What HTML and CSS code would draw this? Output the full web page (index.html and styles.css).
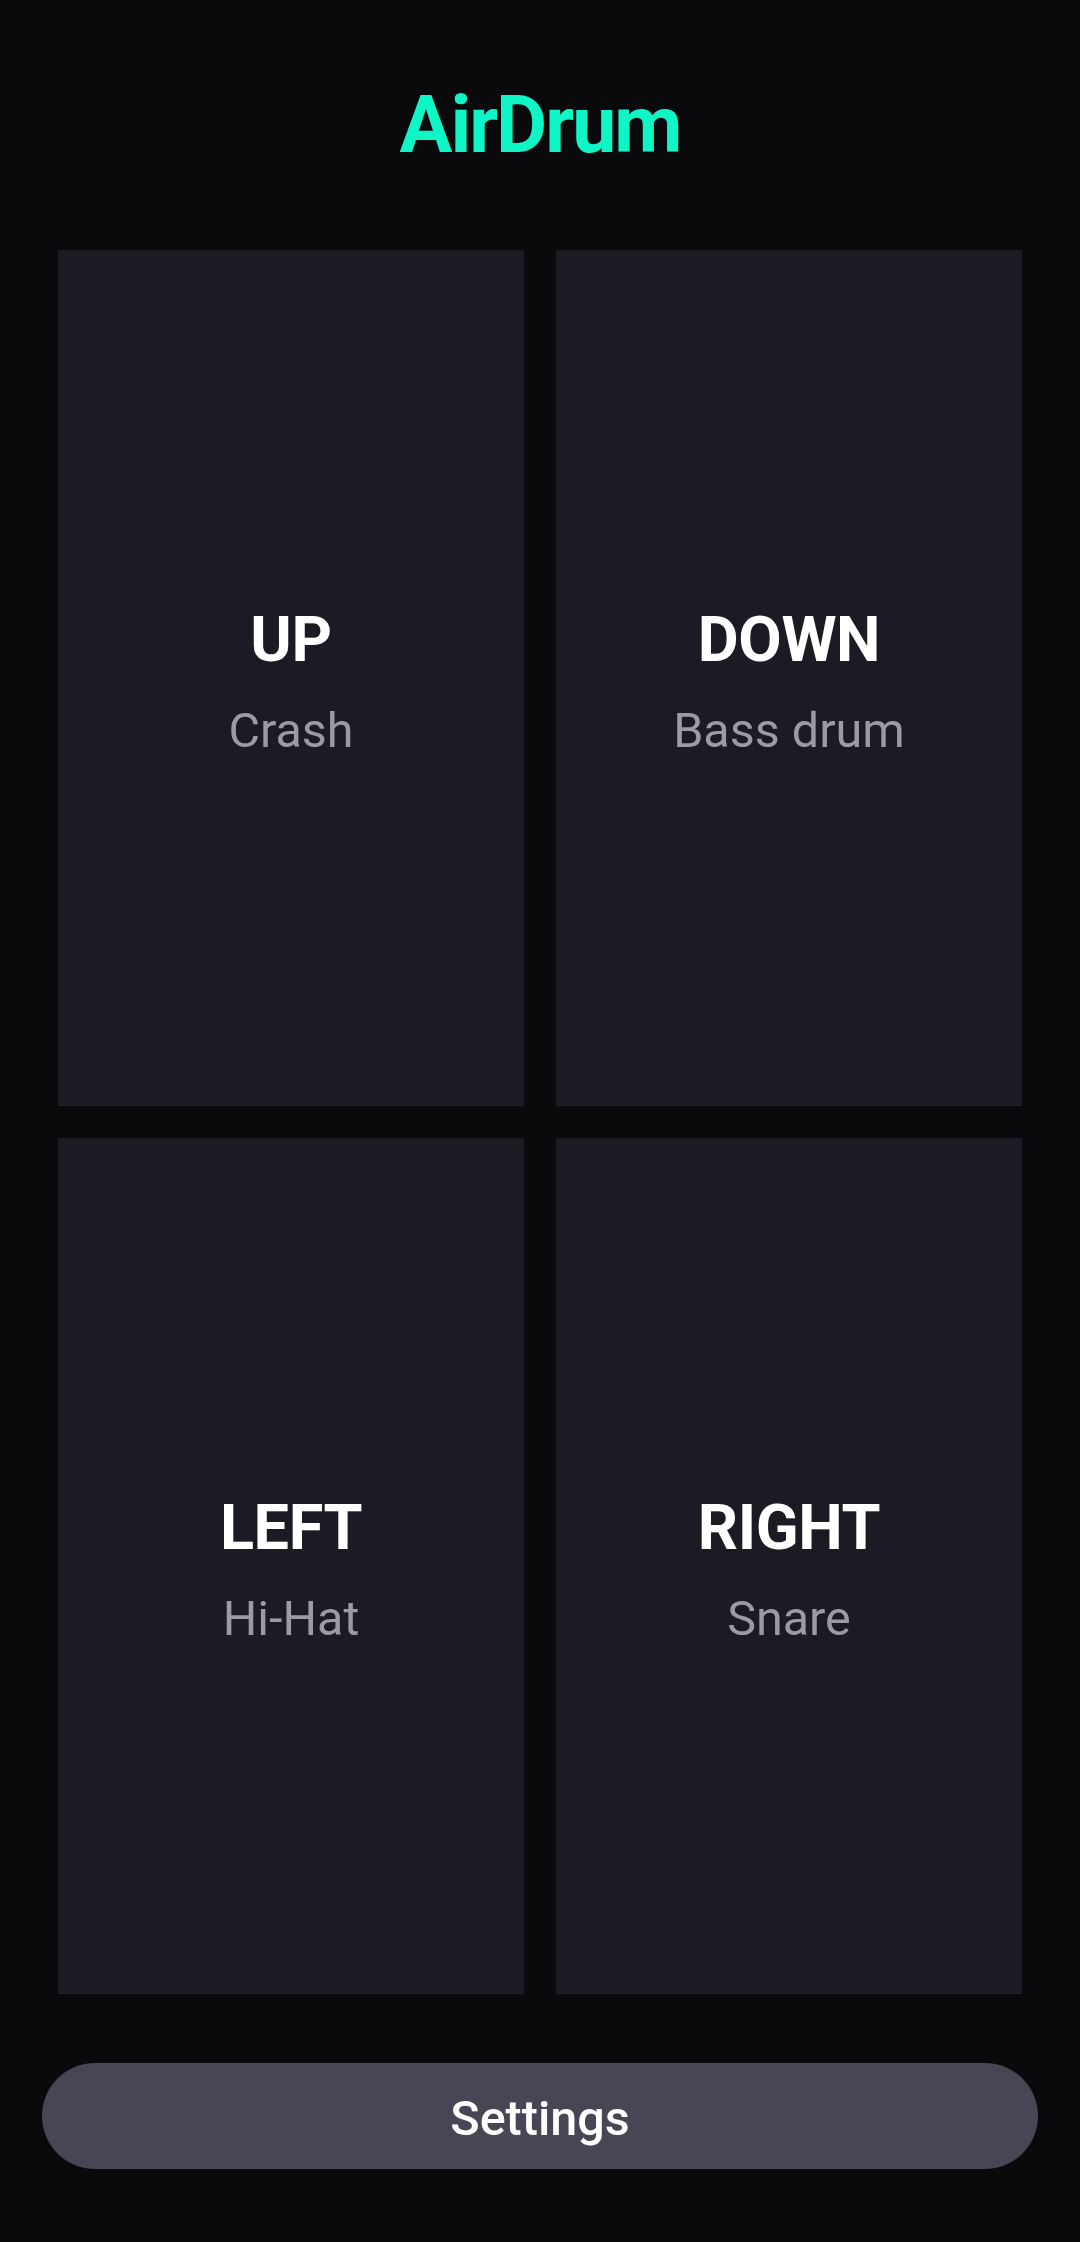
FILE: index.html
```html
<!DOCTYPE html>
<html lang="en">
<head>
<meta charset="utf-8">
<title>AirDrum</title>
<link rel="stylesheet" href="styles.css">
</head>
<body>
<main class="app">
  <h1 class="title">AirDrum</h1>
  <section class="pads">
    <div class="pad"><div class="pad-dir">UP</div><div class="pad-sound">Crash</div></div>
    <div class="pad"><div class="pad-dir">DOWN</div><div class="pad-sound">Bass drum</div></div>
    <div class="pad"><div class="pad-dir">LEFT</div><div class="pad-sound">Hi-Hat</div></div>
    <div class="pad"><div class="pad-dir">RIGHT</div><div class="pad-sound">Snare</div></div>
  </section>
  <button class="settings" type="button">Settings</button>
</main>
</body>
</html>
```
FILE: styles.css
```css
* { box-sizing: border-box; }
html, body {
  margin: 0;
  padding: 0;
  background: #0a0a0d;
}
body {
  font-family: Roboto, "Noto Sans", sans-serif;
}
.app {
  height: 2242px;
  display: flex;
  flex-direction: column;
}
.title {
  margin: 78.6px 0 0;
  font-size: 78.75px;
  line-height: normal;
  font-weight: 700;
  letter-spacing: -2px;
  color: #0ef5c6;
  text-align: center;
}
.pads {
  flex: 1;
  margin-top: 79px;
  padding: 0 57.75px;
  display: grid;
  grid-template-columns: 1fr 1fr;
  grid-template-rows: 1fr 1fr;
  gap: 31.5px;
}
.pad {
  background: #1b1b24;
  display: flex;
  flex-direction: column;
  align-items: center;
  justify-content: center;
  padding-top: 6.3px;
  box-shadow: inset 0 -1px 0 #222230;
}
.pad-dir {
  font-size: 63px;
  line-height: normal;
  font-weight: 700;
  letter-spacing: -0.4px;
  color: #ffffff;
}
.pad-sound {
  margin-top: 26px;
  font-size: 48.5px;
  line-height: normal;
  font-weight: 400;
  color: #9b9ba3;
}
.settings {
  margin: 69px 42px 73px;
  height: 106px;
  border: none;
  border-radius: 53px;
  background: #464655;
  color: #ffffff;
  font-family: Roboto, "Noto Sans", sans-serif;
  font-size: 48.5px;
  font-weight: 500;
  line-height: normal;
  padding: 5px 0 0;
  flex: none;
}
```
